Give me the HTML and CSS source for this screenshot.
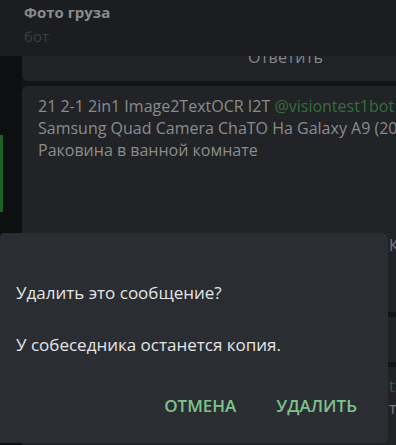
FILE: index.html
```html
<!DOCTYPE html>
<html lang="ru">
<head>
  <meta charset="UTF-8">
  <title>Фото груза</title>
  <link rel="stylesheet" href="styles.css">
</head>
<body>
  <div class="screen">
    <div class="chat-header">
      <div class="chat-title">Фото груза</div>
      <div class="chat-subtitle">бот</div>
    </div>
    <div class="chat-body">
      <div class="side-strip">
        <div class="side-mark"></div>
      </div>
      <div class="messages">
        <div class="card card-reply">
          <div class="reply-label">Ответить</div>
        </div>
        <div class="card card-message">
          <div class="message-line">21 2-1 2in1 Image2TextOCR I2T <span class="mention">@visiontest1bot</span></div>
          <div class="message-line">Samsung Quad Camera ChaTO Ha Galaxy A9 (2018)</div>
          <div class="message-line">Раковина в ванной комнате</div>
          <div class="card-tail">
            <div class="tail-row">К</div>
            <div class="tail-sep tail-sep-first"></div>
            <div class="tail-sep tail-sep-second"></div>
            <div class="tail-row tail-green">t</div>
            <div class="tail-row">т</div>
          </div>
        </div>
      </div>
    </div>

    <div class="dialog">
      <p class="dialog-title">Удалить это сообщение?</p>
      <p class="dialog-text">У собеседника останется копия.</p>
      <div class="dialog-buttons">
        <button type="button" class="dialog-button">Отмена</button>
        <button type="button" class="dialog-button">Удалить</button>
      </div>
    </div>
  </div>
</body>
</html>
```

FILE: styles.css
```css
html, body {
  margin: 0;
  padding: 0;
}

body {
  background-color: #131416;
  font-family: "Open Sans", "Noto Sans", sans-serif;
  overflow: hidden;
}

.screen {
  position: relative;
  width: 396px;
  height: 445px;
  overflow: hidden;
}

.chat-header {
  height: 56px;
  box-sizing: border-box;
  padding: 1px 24px 0;
  background-color: #1b1d20;
}

.chat-title {
  font-size: 15px;
  font-weight: 700;
  line-height: 22px;
  color: #8a8b8d;
}

.chat-subtitle {
  font-size: 15px;
  line-height: 26px;
  color: #3e4043;
}

.chat-body {
  display: flex;
  height: 389px;
}

.side-strip {
  flex-shrink: 0;
  width: 22px;
  background-color: #0e0f10;
  padding-top: 79px;
  box-sizing: border-box;
}

.side-mark {
  width: 3px;
  height: 77px;
  background-color: #1d6226;
}

.messages {
  flex: 1;
  min-width: 0;
  display: flex;
  flex-direction: column;
  gap: 5px;
}

.card {
  background-color: #212326;
}

.card-reply {
  height: 25px;
  overflow: hidden;
  border-bottom-left-radius: 6px;
}

.reply-label {
  margin-top: -11px;
  padding-left: 226px;
  font-size: 16px;
  line-height: 24px;
  color: #86878a;
  letter-spacing: 0.3px;
}

.card-message {
  flex: 1;
  border-top-left-radius: 6px;
  padding: 9px 0 0 16px;
  white-space: nowrap;
  overflow: hidden;
}

.message-line {
  font-size: 16px;
  line-height: 22px;
  color: #8b8c8e;
}

.mention {
  color: #356f3f;
}

.card-tail {
  margin: 73px 0 0 351px;
}

.tail-row {
  font-size: 16px;
  line-height: 22px;
  height: 22px;
  color: #77787a;
}

.tail-sep {
  height: 5px;
  margin-left: -4px;
  background-color: #141517;
}

.tail-sep-first {
  margin-top: 56px;
}

.tail-sep-second {
  margin-top: 45px;
}

.tail-green {
  color: #2e5f36;
  margin-top: 8px;
}

.dialog {
  position: absolute;
  left: 0;
  top: 233px;
  width: 388px;
  height: 210px;
  box-sizing: border-box;
  background-color: #2a2d32;
  border-radius: 4px 6px 6px 0;
  padding: 49px 16px 0 16px;
}

.dialog-title,
.dialog-text {
  margin: 0;
  font-size: 17px;
  line-height: 22px;
  color: #e4e5e6;
}

.dialog-text {
  margin-top: 30px;
}

.dialog-buttons {
  display: flex;
  justify-content: flex-end;
  gap: 40px;
  margin-top: 39px;
  padding-right: 15px;
}

.dialog-button {
  background: none;
  border: none;
  padding: 0;
  font-family: inherit;
  font-size: 17px;
  line-height: 22px;
  font-weight: 600;
  text-transform: uppercase;
  color: #7fc28c;
  cursor: pointer;
}
```
